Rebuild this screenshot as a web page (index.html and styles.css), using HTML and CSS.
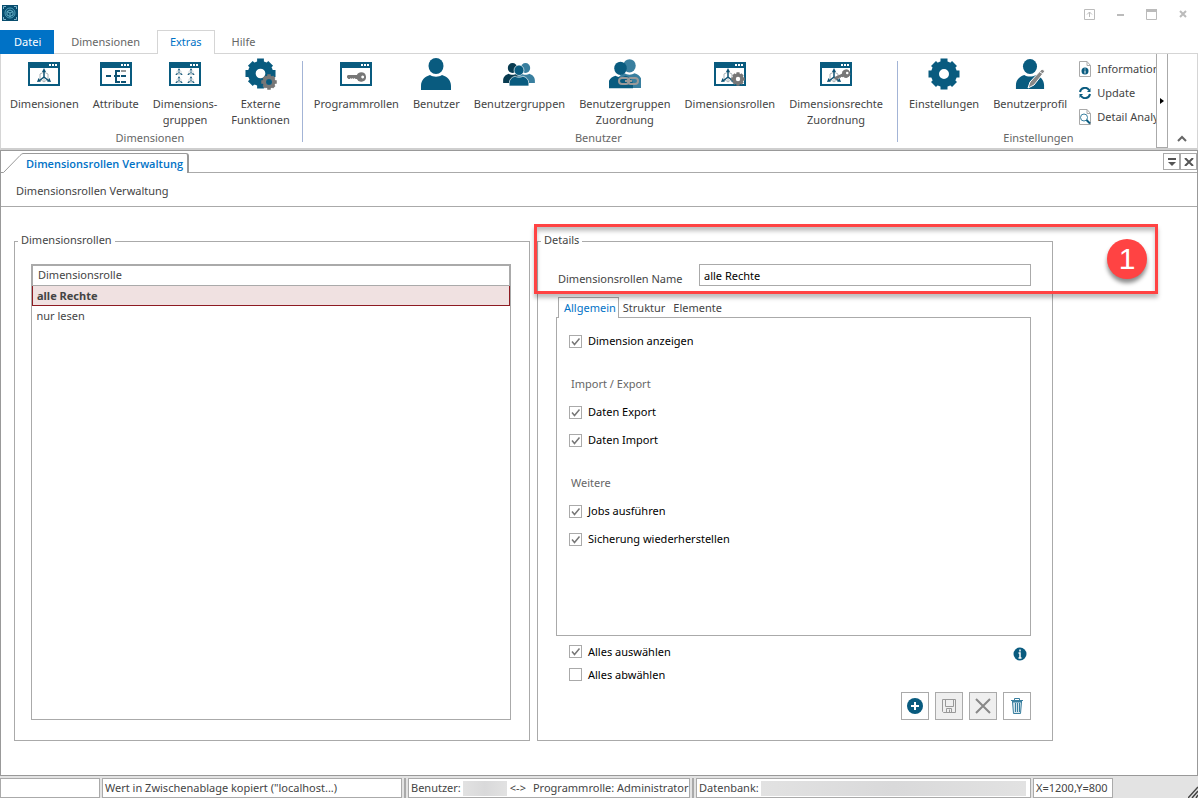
FILE: index.html
```html
<!DOCTYPE html>
<html lang="de">
<head>
<title>Dimensionsrollen Verwaltung</title>
<meta charset="utf-8">
<meta name="viewport" content="width=device-width, initial-scale=1">
<link rel="stylesheet" href="styles.css">
</head>
<body>
<!-- shared icon parts -->
<svg class="defs" aria-hidden="true">
	<symbol id="window" viewBox="0 0 32 24">
		<path fill="#095b7f" d="M0 0h32v24H0z"/>
		<path fill="#fff" d="M2 6h28v16H2z"/>
		<path fill="#fff" d="M21 2h2v2h-2zM24 2h2v2h-2zM27 2h2v2h-2z"/>
	</symbol>
	<symbol id="axes" viewBox="0 0 16 16">
		<path d="M4 6l4-2 4 2v5l-4 3-4-3zM8 9v5" fill="none" stroke="#a9b4ba"/>
		<path d="M8 9V3M8 9l-5 4M8 9l5 4" fill="none" stroke="#0e5273" stroke-width="1.500"/>
		<path d="M8 0l2 4H6zM1 14l1.500-4 2.500 3.500zM15 14l-1.500-4-2.500 3.500z" fill="#0e5273"/>
	</symbol>
	<symbol id="gear" viewBox="0 0 32 32">
		<path d="M16 0.500v31M0.500 16h31M5.500 5.500l21 21M26.500 5.500l-21 21" stroke="currentColor" stroke-width="7" fill="none"/>
		<circle cx="16" cy="16" r="9" fill="#fff" stroke="currentColor" stroke-width="8"/>
	</symbol>
	<symbol id="key" viewBox="0 0 20 10">
		<path fill="currentColor" fill-rule="evenodd" d="M15 0a5 5 0 1 1-4.600 7H9L8 6 7 7 6 6 5 7 4 6 3 7H1.500L0 5.500V4l1-1h9.400A5 5 0 0 1 15 0zm1.500 3.500a1.500 1.500 0 1 0 .01 0z"/>
	</symbol>
	<symbol id="person" viewBox="0 0 30 32">
		<ellipse cx="15" cy="8" rx="7.500" ry="8"/>
		<path d="M0 32v-4c0-6 4-9.500 9-11 3 2.200 9 2.200 12 0 5 1.500 9 5 9 11v4z"/>
	</symbol>
</svg>

<header class="titlebar">
	<svg class="logo" width="16" height="16" viewBox="0 0 16 16">
		<path fill="#084d6e" d="M0 0h16v16H0z"/>
		<path d="M1.500 4V1.500H4M12 1.500h2.500V4M14.500 12v2.500H12M4 14.500H1.500V12" fill="none" stroke="#7fb3c8"/>
		<circle cx="8" cy="8" r="5" fill="none" stroke="#4fa0bb"/>
		<path d="M5 6.500L8 5l3 1.500v3.500L8 11.500 5 10zM5 6.500L8 8l3-1.500M8 8v3.500" fill="none" stroke="#69b5cc"/>
	</svg>
	<div class="window-buttons">
		<button type="button" aria-label="Menüband-Anzeige"><svg width="11" height="11" viewBox="0 0 11 11"><path d="M.5 1v9.500h10V.5H.5zM5.500 3v5M3 5.500L5.500 3 8 5.500"/></svg></button>
		<button type="button" aria-label="Minimieren"><svg width="7" height="11" viewBox="0 0 7 11"><path stroke-width="2" d="M0 6h7"/></svg></button>
		<button type="button" aria-label="Maximieren"><svg width="11" height="11" viewBox="0 0 11 11"><path d="M.5 1v9.500h10V1"/><path stroke-width="3" d="M0 1.500h11"/></svg></button>
		<button type="button" aria-label="Schließen"><svg width="8" height="8" viewBox="0 0 8 8"><path stroke-width="2" d="M1 1l6 6M7 1L1 7"/></svg></button>
	</div>
</header>

<nav class="ribbon-tabs">
	<button type="button" class="ribbon-tab file">Datei</button>
	<button type="button" class="ribbon-tab">Dimensionen</button>
	<button type="button" class="ribbon-tab active">Extras</button>
	<button type="button" class="ribbon-tab">Hilfe</button>
</nav>

<div class="ribbon">
	<div class="ribbon-groups">
		<section class="group dimensions">
			<div class="tools">
				<button type="button" class="tool">
					<svg width="32" height="32"><use href="#window" y="4" width="32" height="24"/><use href="#axes" x="8" y="10" width="16" height="16"/></svg>
					Dimensionen
				</button>
				<button type="button" class="tool">
					<svg width="32" height="32"><use href="#window" y="4" width="32" height="24"/><path d="M6 18h5M14 18h6M21 18h5M21 24h5" stroke="#0e5273" stroke-width="2"/><path d="M20 13h-4v11h4" fill="none" stroke="#0e5273" stroke-width="2"/><path d="M21 13h5" stroke="#999" stroke-width="2"/></svg>
					Attribute
				</button>
				<button type="button" class="tool">
					<svg width="32" height="32"><use href="#window" y="4" width="32" height="24"/><use href="#axes" x="6" y="10" width="8" height="8"/><use href="#axes" x="18" y="10" width="8" height="8"/><use href="#axes" x="6" y="18" width="8" height="8"/><use href="#axes" x="18" y="18" width="8" height="8"/></svg>
					Dimensions-<br>gruppen
				</button>
				<button type="button" class="tool">
					<svg width="32" height="32"><use href="#gear" class="blue" x="0" y="0" width="31" height="31"/><use href="#gear" class="gray" x="16" y="16" width="16" height="16"/><circle cx="24" cy="24" r="3" fill="#095b7f"/></svg>
					Externe<br>Funktionen
				</button>
			</div>
			<h2>Dimensionen</h2>
		</section>
		<section class="group users">
			<div class="tools">
				<button type="button" class="tool">
					<svg width="32" height="32"><use href="#window" y="4" width="32" height="24"/><use href="#key" class="gray" x="7" y="14" width="19" height="10"/></svg>
					Programmrollen
				</button>
				<button type="button" class="tool">
					<svg width="32" height="32"><use href="#person" fill="#095b7f" x="1" width="30" height="32"/></svg>
					Benutzer
				</button>
				<button type="button" class="tool">
					<svg width="32" height="32"><use href="#person" fill="#083b50" x="0" y="5" width="19" height="20"/><use href="#person" fill="#397f9f" x="13" y="5" width="19" height="20"/><use href="#person" fill="#095b7f" stroke="#fff" stroke-width="1" x="6" y="7" width="20" height="21"/></svg>
					Benutzergruppen
				</button>
				<button type="button" class="tool">
					<svg width="32" height="32"><use href="#person" fill="#397f9f" x="8" y="1" width="25" height="27"/><path d="M22 24h10v6H22z" fill="#397f9f"/><use href="#person" fill="#095b7f" x="-1" y="3" width="25" height="28"/><g fill="none" stroke="#999" stroke-width="2"><rect x="10" y="20" width="10" height="6" rx="3"/><rect x="19" y="20" width="10" height="6" rx="3"/><path d="M16 23h7"/></g></svg>
					Benutzergruppen<br>Zuordnung
				</button>
				<button type="button" class="tool">
					<svg width="32" height="32"><use href="#window" y="4" width="32" height="24"/><use href="#axes" x="6" y="10" width="16" height="16"/><use href="#gear" class="gray" x="17" y="14" width="14" height="14"/></svg>
					Dimensionsrollen
				</button>
				<button type="button" class="tool">
					<svg width="32" height="32"><use href="#window" y="4" width="32" height="24"/><use href="#axes" x="6" y="10" width="16" height="16"/><use href="#key" class="gray" x="14" y="13" width="17" height="9" transform="rotate(-25 22 18)"/></svg>
					Dimensionsrechte<br>Zuordnung
				</button>
			</div>
			<h2>Benutzer</h2>
		</section>
		<section class="group">
			<div class="tools">
				<button type="button" class="tool">
					<svg width="32" height="32"><use href="#gear" class="blue" width="32" height="32"/></svg>
					Einstellungen
				</button>
				<button type="button" class="tool">
					<svg width="32" height="32"><use href="#person" fill="#095b7f" x="1" y="1" width="30" height="30"/><path d="M28 11l3 2-11 14-6 3 2-6z" fill="#888" stroke="#fff"/><path d="M26 14l3 2" stroke="#fff"/></svg>
					Benutzerprofil
				</button>
				<div class="small-tools">
					<button type="button"><svg width="12" height="16" viewBox="0 0 12 16"><path d="M.5.5H8l3.500 4v11H.5zM8 .5v4h3.500" fill="#fff" stroke="#aaa"/><circle cx="6" cy="10" r="3.500" fill="#095b7f"/><path d="M6 7.500v1M6 9.500v3" stroke="#fff"/></svg>Information</button>
					<button type="button"><svg width="12" height="12" viewBox="0 0 12 12"><path d="M1 5a5 5 0 0 1 9-2M11 7a5 5 0 0 1-9 2" fill="none" stroke="#095b7f" stroke-width="2"/><path d="M11.500 1v4H8zM.5 11V7H4z" fill="#095b7f"/></svg>Update</button>
					<button type="button"><svg width="12" height="16" viewBox="0 0 12 16"><path d="M.5.5H8l3.500 4v11H.5zM8 .5v4h3.500" fill="#fff" stroke="#aaa"/><circle cx="5" cy="8.500" r="3.500" fill="#fff" stroke="#397f9f"/><path d="M7.500 11l3.500 3.500" stroke="#095b7f" stroke-width="2"/></svg>Detail Analyse</button>
				</div>
			</div>
			<h2>Einstellungen</h2>
		</section>
	</div>
	<button type="button" class="ribbon-scroll" aria-label="Weitere Befehle"><svg width="4" height="6" viewBox="0 0 4 6"><path d="M0 0l4 3-4 3z"/></svg></button>
	<button type="button" class="ribbon-collapse" aria-label="Menüband reduzieren"><svg width="10" height="7" viewBox="0 0 10 7"><path d="M1 6l4-4 4 4" fill="none" stroke="#666" stroke-width="2"/></svg></button>
</div>

<main class="document">
	<div class="doc-tabs">
		<svg class="slant" width="22" height="20" viewBox="0 0 22 20"><path d="M0 19.500h2.500L19 2.500Q21 .5 22 .5" fill="none" stroke="#999"/></svg>
		<button type="button" class="doc-tab">Dimensionsrollen Verwaltung</button>
		<div class="doc-actions">
			<button type="button" aria-label="Fensterliste"><svg width="8" height="8" viewBox="0 0 8 8"><path d="M0 0h8v2H0zM0 4h8L4 8z"/></svg></button>
			<button type="button" aria-label="Tab schließen"><svg width="10" height="8" viewBox="0 0 10 8"><path d="M1 0l8 8M9 0L1 8" stroke="#555" stroke-width="2"/></svg></button>
		</div>
	</div>
	<h1>Dimensionsrollen Verwaltung</h1>

	<div class="panels">
		<fieldset class="panel roles">
			<legend>Dimensionsrollen</legend>
			<div class="list">
				<table>
					<thead>
						<tr><th scope="col">Dimensionsrolle</th></tr>
					</thead>
					<tbody>
						<tr class="selected"><td>alle Rechte</td></tr>
						<tr><td>nur lesen</td></tr>
					</tbody>
				</table>
			</div>
		</fieldset>

		<div class="details-wrap">
			<fieldset class="panel details">
				<legend>Details</legend>
				<div class="field">
					<label for="role-name">Dimensionsrollen Name</label>
					<input type="text" id="role-name" value="alle Rechte">
				</div>
				<div class="tabs" role="tablist">
					<button type="button" class="active" role="tab" aria-selected="true">Allgemein</button>
					<button type="button" role="tab" aria-selected="false">Struktur</button>
					<button type="button" role="tab" aria-selected="false">Elemente</button>
				</div>
				<div class="rights" role="tabpanel">
					<label class="check"><input type="checkbox" checked>Dimension anzeigen</label>
					<h3>Import / Export</h3>
					<label class="check"><input type="checkbox" checked>Daten Export</label>
					<label class="check"><input type="checkbox" checked>Daten Import</label>
					<h3>Weitere</h3>
					<label class="check"><input type="checkbox" checked>Jobs ausführen</label>
					<label class="check"><input type="checkbox" checked>Sicherung wiederherstellen</label>
				</div>
				<div class="select-all">
					<div>
						<label class="check"><input type="checkbox" checked>Alles auswählen</label>
						<label class="check"><input type="checkbox">Alles abwählen</label>
					</div>
					<button type="button" class="info" aria-label="Info"><svg width="14" height="14" viewBox="0 0 14 14"><circle cx="7" cy="7" r="6.500" fill="#095b7f"/><path d="M7 2.500v2M5.500 6H7v5M5.500 11h3" stroke="#fff" stroke-width="1.500" fill="none"/></svg></button>
				</div>
				<div class="actions">
					<button type="button" aria-label="Neu"><svg width="16" height="16" viewBox="0 0 16 16"><circle cx="8" cy="8" r="8" fill="#095b7f"/><path d="M4 8h8M8 4v8" stroke="#fff" stroke-width="2"/></svg></button>
					<button type="button" disabled aria-label="Speichern"><svg width="14" height="14" viewBox="0 0 14 14" fill="none" stroke="#999"><path d="M.5.5h13v13h-12l-1-1zM3.500.5v7h8v-7M4.500 13.500v-4h5v4M7.500 10.500v3"/></svg></button>
					<button type="button" disabled aria-label="Abbrechen"><svg width="16" height="16" viewBox="0 0 16 16"><path d="M1 1l14 14M15 1L1 15" stroke="#888" stroke-width="2"/></svg></button>
					<button type="button" aria-label="Löschen"><svg width="12" height="16" viewBox="0 0 12 16" fill="none" stroke="#397f9f"><path d="M1.500 4h9l-1 11.500h-7z" fill="#d3e4ec"/><path d="M0 2.500h12M3.500 2V.5h5V2M4.500 5v9M6.500 5v9M8.500 5v9"/><path d="M1 3.500h10"/></svg></button>
				</div>
			</fieldset>
			<div class="highlight"><span class="step">1</span></div>
		</div>
	</div>
</main>

<footer class="statusbar">
	<div class="cell progress"></div>
	<div class="cell message">Wert in Zwischenablage kopiert ("localhost...)</div>
	<i class="divider"></i>
	<div class="cell user">Benutzer:<span class="hidden-value"></span><span>&lt;-&gt;</span><span class="role">Programmrolle: Administrator</span></div>
	<i class="divider"></i>
	<div class="cell database">Datenbank:<span class="hidden-value"></span></div>
	<div class="cell size">X=1200,Y=800</div>
	<svg class="grip" width="10" height="12" viewBox="0 0 10 12"><path d="M0 12L10 1M4 12l6-7M8 12l2-3" stroke="#444" stroke-width="1.500"/></svg>
</footer>
</body>
</html>
```
FILE: styles.css
```css
* {
	box-sizing: border-box;
}
body {
	margin: 0;
	min-height: 100vh;
	display: flex;
	flex-direction: column;
	background: #fff;
	color: #444;
	font-family: "Noto Sans", "Open Sans", sans-serif;
	font-size: 11px;
	line-height: 16px;
}
button, input {
	font: inherit;
	color: inherit;
}
button {
	padding: 0;
	border: none;
	background: none;
}
h1, h2, h3 {
	margin: 0;
	font-size: inherit;
	font-weight: normal;
}
svg {
	display: block;
	flex: none;
}
.defs {
	position: absolute;
	width: 0;
	height: 0;
}
.blue {
	color: #095b7f;
}
.gray {
	color: #777;
}

/* title bar */
.titlebar {
	display: flex;
	justify-content: space-between;
	height: 30px;
	padding-left: 2px;
}
.logo {
	margin-top: 5px;
}
.window-buttons {
	display: flex;
	height: 28px;
}
.window-buttons button {
	display: flex;
	align-items: center;
	justify-content: center;
	width: 31px;
}
.window-buttons path {
	fill: none;
	stroke: #bbb;
}

/* ribbon */
.ribbon-tabs {
	display: flex;
	height: 24px;
	border-bottom: 1px solid #d5d5d5;
}
.ribbon-tab {
	height: 24px;
	padding: 0 17px;
	color: #666;
}
.ribbon-tab.file {
	padding: 0 13px 0 14px;
	background: #0072c6;
	color: #fff;
}
.ribbon-tab.active {
	padding: 0 12px 1px;
	border: 1px solid #d5d5d5;
	border-bottom: none;
	background: #fff;
	color: #0072c6;
}
.ribbon {
	display: flex;
	height: 96px;
	border-left: 1px solid #d5d5d5;
	border-right: 1px solid #d5d5d5;
	border-bottom: 2px solid #cfcfcf;
}
.ribbon-groups {
	flex: 1;
	min-width: 0;
	display: flex;
	overflow: hidden;
}
.group {
	flex: none;
	position: relative;
	display: flex;
	flex-direction: column;
	padding: 4px 3px 0 4px;
}
.group.dimensions {
	padding-left: 2px;
	padding-right: 6px;
}
.group.users {
	padding-right: 8px;
}
.group:not(:last-child)::after {
	content: "";
	position: absolute;
	top: 7px;
	right: 0;
	bottom: 6px;
	border-right: 1px solid #a3b4d6;
}
.group h2 {
	text-align: center;
	color: #666;
}
.tools {
	display: flex;
	height: 72px;
}
.tool {
	display: flex;
	flex-direction: column;
	align-items: center;
	padding: 0 7px;
}
.tool svg {
	margin-bottom: 6px;
}
.small-tools {
	display: flex;
	flex-direction: column;
	padding: 0 5px;
}
.small-tools button {
	display: flex;
	align-items: center;
	gap: 6px;
	height: 24px;
	padding-bottom: 2px;
	white-space: nowrap;
}
.ribbon-scroll {
	width: 12px;
	display: flex;
	align-items: center;
	justify-content: center;
	border: 1px solid #aaa;
	border-top: none;
}
.ribbon-collapse {
	width: 29px;
	display: flex;
	align-items: flex-end;
	justify-content: center;
	padding: 0 2px 6px 0;
}

/* document */
.document {
	flex: 1;
	display: flex;
	flex-direction: column;
	border: 1px solid #999;
}
.doc-tabs {
	display: flex;
	align-items: stretch;
	height: 22px;
	padding-top: 2px;
}
.doc-tab {
	padding: 0 4px 0 3px;
	border: solid #999;
	border-width: 1px 2px 0 0;
	border-radius: 0 3px 0 0;
	color: #0072c6;
	font-family: "Open Sans", "Noto Sans", sans-serif;
	font-weight: 600;
}
.doc-actions {
	flex: 1;
	display: flex;
	justify-content: flex-end;
	align-items: flex-start;
	border-bottom: 1px solid #aaa;
}
.doc-actions button {
	display: flex;
	align-items: center;
	justify-content: center;
	width: 17px;
	height: 17px;
	border: 1px solid #aaa;
	fill: #555;
}
.document h1 {
	padding: 10px 15px 7px;
	border-bottom: 1px solid #aaa;
}
.panels {
	flex: 1;
	display: grid;
	grid-template-columns: 1fr 1fr;
	gap: 7px;
	padding: 26px 144px 34px 13px;
}
.panel {
	min-width: 0;
	margin: 0;
	border: 1px solid #aaa;
	display: flex;
	flex-direction: column;
}
.panel legend {
	padding: 0 3px 2px;
	line-height: 14px;
}
.roles {
	padding: 15px 18px 20px 16px;
}
.roles legend {
	margin-left: -13px;
}

.list {
	flex: 1;
	border: 1px solid #aaa;
}
.list table {
	width: 100%;
	border-collapse: collapse;
}
.list th {
	height: 20px;
	padding: 0 5px 1px;
	border: 1px solid #aaa;
	line-height: 14px;
	text-align: left;
	font-weight: normal;
}
.list td {
	height: 20px;
	padding: 0 4px;
}
.list .selected td {
	border: 1px solid #8e1b22;
	background: #f0e1e1;
	font-weight: bold;
}

.details-wrap {
	position: relative;
	display: flex;
	min-width: 0;
}
.details {
	flex: 1;
	padding: 15px 21px 20px 18px;
}
.details legend {
	margin-left: -15px;
}
.field {
	display: flex;
	align-items: flex-end;
	line-height: 14px;
}
.field label {
	flex: none;
	width: 143px;
	padding-left: 2px;
}
.field input {
	flex: 1;
	min-width: 0;
	height: 22px;
	padding: 0 4px;
	border: 1px solid #aaa;
	color: #000;
}
.tabs {
	position: relative;
	display: flex;
	height: 20px;
	margin-top: 11px;
	padding-left: 2px;
}
.tabs button {
	padding: 2px 4px 0;
}
.tabs .active {
	height: 21px;
	padding: 0 2px 0 5px;
	border: 1px solid #aaa;
	border-bottom: none;
	background: #fff;
	color: #0072c6;
}
.rights {
	flex: 1;
	padding: 9px 12px;
	border: 1px solid #aaa;
}
.rights h3 {
	padding: 21px 2px 6px;
	color: #666;
}
.check {
	display: flex;
	align-items: center;
	gap: 6px;
	height: 28px;
	color: #000;
}
.check input {
	appearance: none;
	flex: none;
	width: 13px;
	height: 13px;
	margin: 0;
	border: 1px solid #aaa;
	background: #fff;
}
.check input:checked {
	background: #fff url("data:image/svg+xml,%3Csvg xmlns='http://www.w3.org/2000/svg' viewBox='0 0 11 11'%3E%3Cpath d='M2 5.500l2.500 3L9.500 2.500' fill='none' stroke='%23777' stroke-width='1.500'/%3E%3C/svg%3E");
}
.select-all {
	display: flex;
	justify-content: space-between;
	align-items: flex-start;
	padding: 4px 4px 6px 13px;
}
.select-all .check {
	height: 23px;
}
.info {
	padding-top: 7px;
}
.actions {
	display: flex;
	justify-content: flex-end;
	gap: 6px;
}
.actions button {
	display: flex;
	align-items: center;
	justify-content: center;
	width: 28px;
	height: 28px;
	border: 1px solid #aaa;
}
.actions button:disabled {
	background: #efefef;
}

/* callout over the name field */
.highlight {
	position: absolute;
	top: -9px;
	left: -3px;
	right: -105px;
	height: 70px;
	border: 3px solid #ff4343;
	box-shadow: 0 4px 4px rgba(0, 0, 0, .25), inset 0 4px 4px rgba(0, 0, 0, .25);
	pointer-events: none;
}
.step {
	position: absolute;
	top: 12px;
	right: 8px;
	width: 40px;
	height: 40px;
	border-radius: 50%;
	background: #ff4343;
	box-shadow: 0 4px 4px rgba(0, 0, 0, .45);
	color: #fff;
	font-family: "Liberation Sans", Arial, sans-serif;
	font-size: 30px;
	line-height: 40px;
	text-align: center;
}

/* status bar */
.statusbar {
	display: flex;
	align-items: stretch;
	gap: 2px;
	height: 22px;
	padding-top: 2px;
	background: #e3e3e3;
}
.cell {
	display: flex;
	align-items: center;
	flex: none;
	padding: 0 2px;
	border: 1px solid #aaa;
	background: #fff;
	white-space: nowrap;
	overflow: hidden;
}
.progress {
	width: 100px;
}
.message {
	width: 300px;
}
.divider {
	width: 2px;
	background: #aaa;
}
.user {
	width: 282px;
}
.user .hidden-value {
	flex: none;
	width: 44px;
	margin-right: 3px;
}
.role {
	margin-left: 7px;
}
.database {
	flex: 1;
}
.database .hidden-value {
	flex: 1;
}
.size {
	width: 80px;
}
.hidden-value {
	height: 15px;
	margin: 0 2px;
	background: linear-gradient(90deg, #e2e2e2, #d9d9da, #e2e2e2);
}
.grip {
	align-self: flex-end;
	margin-left: 73px;
}
```
